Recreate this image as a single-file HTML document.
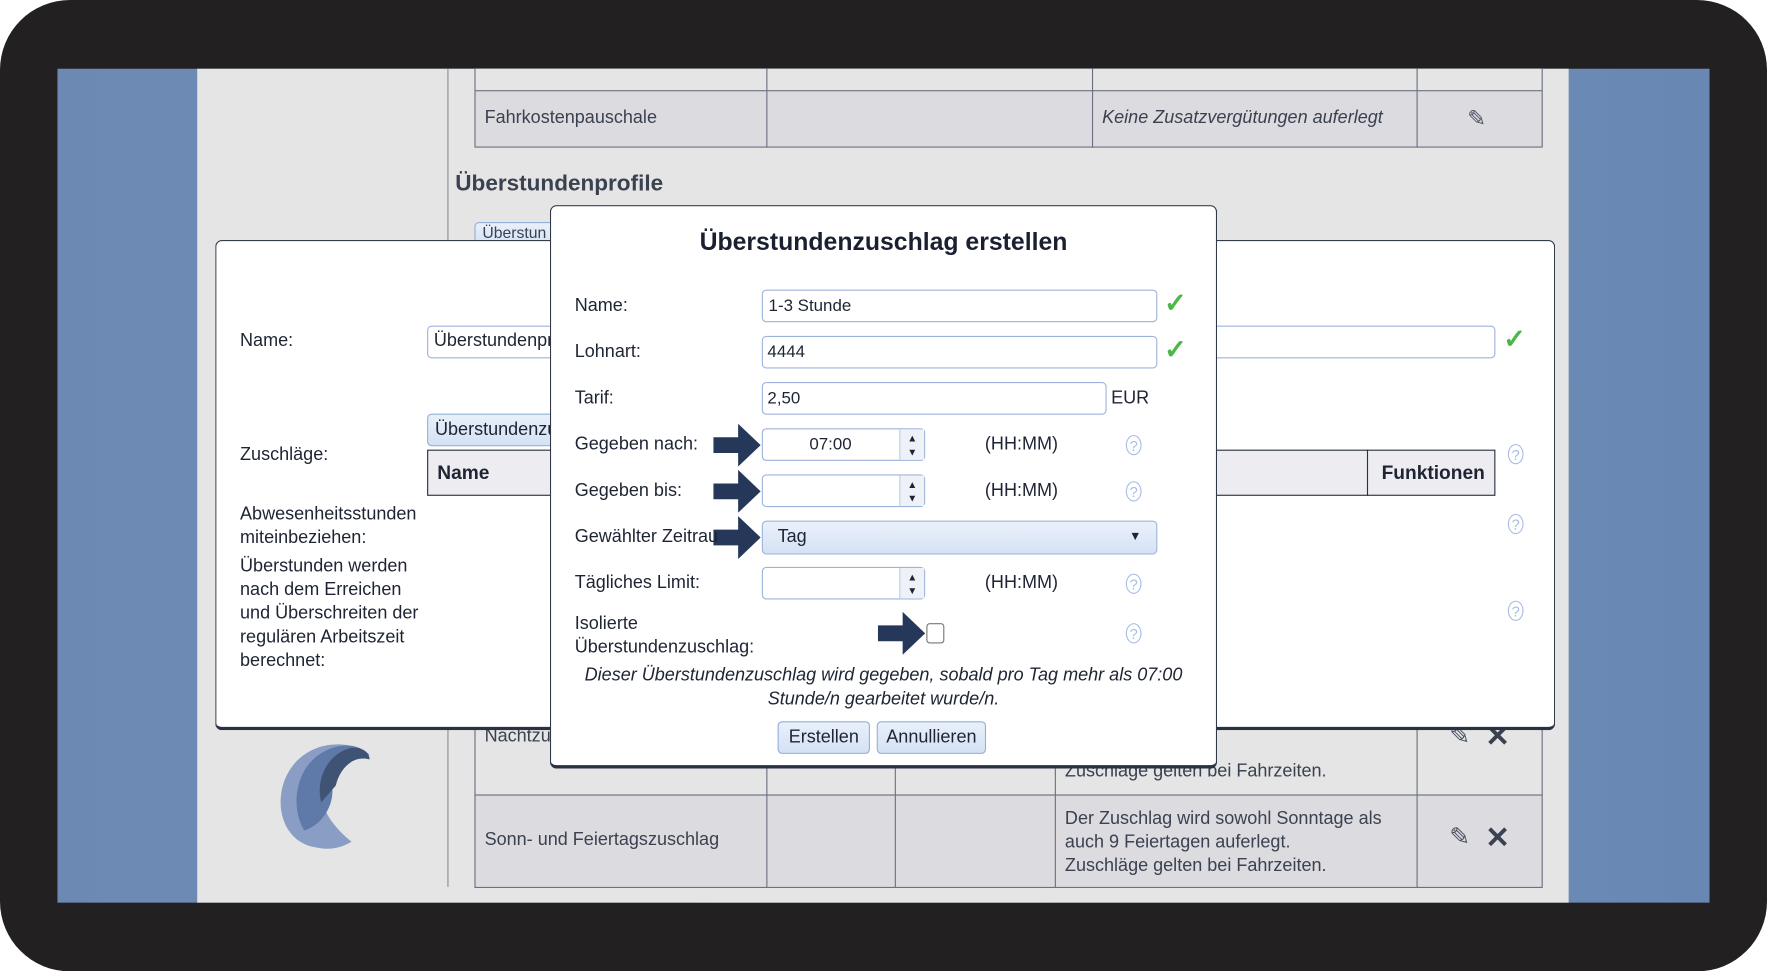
<!DOCTYPE html>
<html><head><meta charset="utf-8">
<style>
html,body{margin:0;padding:0;width:1767px;height:971px;overflow:hidden;background:#fff;}
#w{position:absolute;left:0;top:0;width:1568px;height:862px;transform:scale(1.12691);transform-origin:0 0;font-family:"Liberation Sans",sans-serif;font-size:16px;color:#1e2433;}
.a{position:absolute;}
.frame{left:0;top:0;width:1568px;height:862px;background:#222021;border-radius:62px;}
.screen{left:51px;top:61px;width:1466px;height:740px;background:linear-gradient(90deg,#6b89b3,#7391b9 50%,#6888b3);}
.page{left:175px;top:61px;width:1217px;height:740px;background:#e5e5e5;}
.t{position:absolute;white-space:nowrap;}
.cell{position:absolute;border:1px solid #6b7180;box-sizing:border-box;}
.inp{position:absolute;background:#fff;border:1px solid #9db3dc;border-radius:4px;box-sizing:border-box;}
.dlg{position:absolute;background:#fff;border:1px solid #303848;border-bottom:3px solid #2a3142;border-radius:6px;box-sizing:border-box;}
.help{position:absolute;width:14px;height:18px;border:1.5px solid #a8bde6;border-radius:50%;color:#a8bde6;font-size:13px;text-align:center;line-height:18px;box-sizing:border-box;}
.chk{position:absolute;color:#4cb648;font-size:24px;font-weight:bold;}
.btn{position:absolute;background:linear-gradient(#e8f0fa,#d4e2f5);border:1px solid #93afd9;border-radius:4px;box-sizing:border-box;text-align:center;}
.spin{position:absolute;top:0;right:0;width:22px;height:100%;border-left:1px solid #c0cde6;background:#eef2f8;font-size:9px;line-height:12px;text-align:center;padding-top:2px;box-sizing:border-box;}
</style></head><body><div id="w">
<div class="a frame"></div>
<div class="a screen"></div>
<div class="a page"></div>
<div class="a" style="left:397px;top:61px;width:1px;height:726px;background:#8a8f99"></div>

<!-- top table -->
<div class="a" style="left:421px;top:61px;width:948px;height:20px;background:#e5e5e5;border-left:1px solid #6b7180;border-right:1px solid #6b7180;box-sizing:border-box"></div>
<div class="cell" style="left:421px;top:80px;width:948px;height:51px;background:#dcdce0"></div>
<div class="a" style="left:680px;top:61px;width:1px;height:70px;background:#6b7180"></div>
<div class="a" style="left:969px;top:61px;width:1px;height:70px;background:#6b7180"></div>
<div class="a" style="left:1257px;top:61px;width:1px;height:70px;background:#6b7180"></div>
<div class="t" style="left:430px;top:96px;color:#3a4150">Fahrkostenpauschale</div>
<div class="t" style="left:978px;top:96px;font-style:italic;color:#3a4150">Keine Zusatzvergütungen auferlegt</div>
<div class="t" style="left:1302px;top:93px;font-size:20px;color:#4a5264">✎</div>
<div class="t" style="left:404px;top:152px;font-size:20px;font-weight:bold;color:#3a4150">Überstundenprofile</div>
<div class="btn" style="left:421px;top:197px;width:80px;height:22px;font-size:14px;color:#3a4150;overflow:hidden;text-align:left;padding-left:6px">Überstun</div>

<!-- lower table -->
<div class="cell" style="left:421px;top:630px;width:948px;height:76px;background:#e5e5e5"></div>
<div class="cell" style="left:421px;top:705px;width:948px;height:83px;background:#dcdce0"></div>
<div class="a" style="left:680px;top:630px;width:1px;height:158px;background:#6b7180"></div>
<div class="a" style="left:794px;top:630px;width:1px;height:158px;background:#6b7180"></div>
<div class="a" style="left:936px;top:630px;width:1px;height:158px;background:#6b7180"></div>
<div class="a" style="left:1257px;top:630px;width:1px;height:158px;background:#6b7180"></div>
<div class="t" style="left:430px;top:645px;color:#3a4150">Nachtzu</div>
<div class="t" style="left:945px;top:676px;color:#3a4150">Zuschläge gelten bei Fahrzeiten.</div>
<div class="t" style="left:430px;top:737px;color:#3a4150">Sonn- und Feiertagszuschlag</div>
<div class="t" style="left:945px;top:716px;color:#3a4150;line-height:21px">Der Zuschlag wird sowohl Sonntage als<br>auch 9 Feiertagen auferlegt.<br>Zuschläge gelten bei Fahrzeiten.</div>
<div class="t" style="left:1286px;top:730px;font-size:22px;color:#4a5264">✎</div>
<div class="t" style="left:1318px;top:728px;font-size:26px;font-weight:bold;color:#3a4150">✕</div>
<div class="t" style="left:1286px;top:640px;font-size:22px;color:#4a5264">✎</div>
<div class="t" style="left:1318px;top:638px;font-size:26px;font-weight:bold;color:#3a4150">✕</div>

<!-- logo -->
<svg class="a" style="left:240px;top:652px" width="95" height="105" viewBox="0 0 95 105">
<path d="M40 100 C10 95 2 60 15 35 C25 15 50 2 80 12 C60 15 45 30 45 50 C45 70 60 85 72 95 C60 102 50 102 40 100Z" fill="#7f95c0" opacity=".9"/>
<path d="M30 85 C18 65 22 35 40 20 C55 8 75 5 88 18 C70 15 55 30 55 50 C55 65 45 80 30 85Z" fill="#5f79a8"/>
<path d="M45 60 C40 40 50 18 70 12 C80 10 88 15 88 22 C75 18 62 28 58 45Z" fill="#3f5475"/>
</svg>

<!-- back dialog -->
<div class="dlg" style="left:191px;top:213px;width:1189px;height:435px"></div>
<div class="t" style="left:213px;top:294px">Name:</div>
<div class="inp" style="left:379px;top:289px;width:948px;height:29px"></div>
<div class="t" style="left:385px;top:294px">Überstundenprofil</div>
<div class="chk" style="left:1334px;top:287px">✓</div>
<div class="t" style="left:213px;top:395px">Zuschläge:</div>
<div class="btn" style="left:379px;top:367px;width:130px;height:29px;text-align:left;padding:5px 0 0 6px">Überstundenzuschlag</div>
<div class="a" style="left:379px;top:399px;width:948px;height:41px;background:#ededf1;border:1px solid #2a3142;box-sizing:border-box"></div>
<div class="t" style="left:388px;top:410px;font-weight:bold;font-size:17px">Name</div>
<div class="a" style="left:1213px;top:399px;width:1px;height:41px;background:#2a3142"></div>
<div class="t" style="left:1226px;top:410px;font-weight:bold;font-size:17px">Funktionen</div>
<div class="help" style="left:1338px;top:394px">?</div>
<div class="help" style="left:1338px;top:456px">?</div>
<div class="help" style="left:1338px;top:533px">?</div>
<div class="t" style="left:213px;top:446px;line-height:21px">Abwesenheitsstunden<br>miteinbeziehen:</div>
<div class="t" style="left:213px;top:492px;line-height:21px">Überstunden werden<br>nach dem Erreichen<br>und Überschreiten der<br>regulären Arbeitszeit<br>berechnet:</div>

<!-- front dialog -->
<div class="dlg" style="left:488px;top:182px;width:592px;height:500px"></div>
<div class="t" style="left:488px;width:592px;text-align:center;top:202px;font-size:22px;font-weight:bold;color:#1a2030">Überstundenzuschlag erstellen</div>

<div class="t" style="left:510px;top:263px">Name:</div>
<div class="inp" style="left:676px;top:257px;width:351px;height:29px"></div>
<div class="t" style="left:682px;top:263px;font-size:15px">1-3 Stunde</div>
<div class="chk" style="left:1033px;top:255px">✓</div>

<div class="t" style="left:510px;top:304px">Lohnart:</div>
<div class="inp" style="left:676px;top:298px;width:351px;height:29px"></div>
<div class="t" style="left:681px;top:304px;font-size:15px">4444</div>
<div class="chk" style="left:1033px;top:296px">✓</div>

<div class="t" style="left:510px;top:345px">Tarif:</div>
<div class="inp" style="left:676px;top:339px;width:306px;height:29px"></div>
<div class="t" style="left:681px;top:345px;font-size:15px">2,50</div>
<div class="t" style="left:986px;top:345px">EUR</div>

<svg class="a" style="left:633px;top:376px" width="42" height="38"><path d="M0 12H22V0L42 19 22 38V26H0Z" fill="#26385a"/></svg>
<svg class="a" style="left:633px;top:417px" width="42" height="38"><path d="M0 12H22V0L42 19 22 38V26H0Z" fill="#26385a"/></svg>
<svg class="a" style="left:633px;top:458px" width="42" height="38"><path d="M0 12H22V0L42 19 22 38V26H0Z" fill="#26385a"/></svg>
<svg class="a" style="left:779px;top:543px" width="42" height="38"><path d="M0 12H22V0L42 19 22 38V26H0Z" fill="#26385a"/></svg>

<div class="t" style="left:510px;top:386px">Gegeben nach:</div>
<div class="inp" style="left:676px;top:380px;width:145px;height:29px"><div class="spin">▲<br>▼</div></div>
<div class="t" style="left:676px;width:122px;text-align:center;top:386px;font-size:15px">07:00</div>
<div class="t" style="left:874px;top:386px">(HH:MM)</div>
<div class="help" style="left:999px;top:386px">?</div>

<div class="t" style="left:510px;top:427px">Gegeben bis:</div>
<div class="inp" style="left:676px;top:421px;width:145px;height:29px"><div class="spin">▲<br>▼</div></div>
<div class="t" style="left:874px;top:427px">(HH:MM)</div>
<div class="help" style="left:999px;top:427px">?</div>

<div class="t" style="left:510px;top:468px">Gewählter Zeitrau</div>
<div class="inp" style="left:676px;top:462px;width:351px;height:30px;background:linear-gradient(#eaf1fb,#d5e2f4)"></div>
<div class="t" style="left:690px;top:468px">Tag</div>
<div class="t" style="left:1002px;top:470px;font-size:11px">▼</div>

<div class="t" style="left:510px;top:509px">Tägliches Limit:</div>
<div class="inp" style="left:676px;top:503px;width:145px;height:29px"><div class="spin">▲<br>▼</div></div>
<div class="t" style="left:874px;top:509px">(HH:MM)</div>
<div class="help" style="left:999px;top:509px">?</div>

<div class="t" style="left:510px;top:543px;line-height:21px">Isolierte<br>Überstundenzuschlag:</div>
<div class="a" style="left:822px;top:553px;width:16px;height:18px;border:1.5px solid #777;border-radius:3px;box-sizing:border-box;background:#fff"></div>
<div class="help" style="left:999px;top:553px">?</div>

<div class="t" style="left:488px;width:592px;text-align:center;top:589px;font-style:italic;line-height:21px">Dieser Überstundenzuschlag wird gegeben, sobald pro Tag mehr als 07:00<br>Stunde/n gearbeitet wurde/n.</div>

<div class="btn" style="left:690px;top:640px;width:82px;height:29px;line-height:27px">Erstellen</div>
<div class="btn" style="left:778px;top:640px;width:97px;height:29px;line-height:27px">Annullieren</div>
</div></body></html>
